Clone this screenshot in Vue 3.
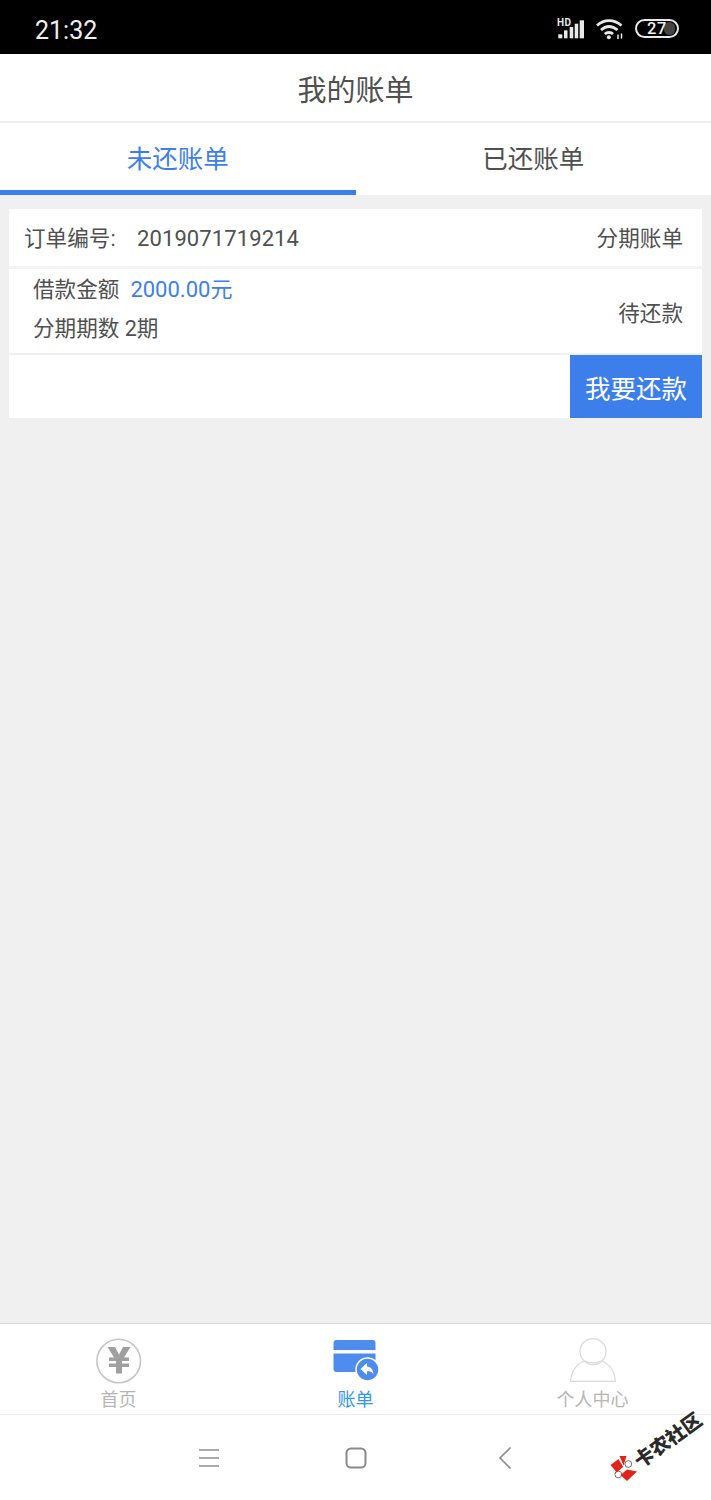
<script setup>
const tabs = [
  { label: '未还账单', active: true },
  { label: '已还账单', active: false },
]
</script>

<template>
  <div class="page">
    <div class="status">
      <span class="time">21:32</span>
      <div class="status-icons">
        <svg width="28" height="24" viewBox="0 0 28 24">
          <text x="0" y="9" class="hd">HD</text>
          <rect x="1.300" y="17.300" width="4" height="4" fill="#e8e8e8" />
          <rect x="7" y="13.300" width="3.500" height="8" fill="#e8e8e8" />
          <rect x="12.700" y="10" width="3.500" height="11.300" fill="#e8e8e8" />
          <rect x="17.700" y="6.700" width="3.500" height="14.600" fill="#e8e8e8" />
          <rect x="22.700" y="3.300" width="4.300" height="18" fill="#e8e8e8" />
        </svg>
        <svg width="28" height="22" viewBox="0 0 28 22" fill="none" stroke="#e8e8e8" stroke-width="2.800">
          <path d="M1 7.500C8 1 18 1 25.500 7.500" />
          <path d="M5 12C10 7.500 16 7.500 21.500 12" />
          <path d="M8.800 16C11 14 15 14 17 16" />
          <circle cx="12.900" cy="19.300" r="2" fill="#e8e8e8" stroke="none" />
          <path d="M22 16.500v4.500M25.500 15.500v5" stroke-width="1.500" />
        </svg>
        <div class="battery">
          <span class="battery-fill"></span>
          <span class="battery-num">27</span>
        </div>
      </div>
    </div>

    <header class="title">我的账单</header>

    <nav class="tabs">
      <div v-for="t in tabs" :key="t.label" class="tab" :class="{ active: t.active }">{{ t.label }}</div>
    </nav>

    <main class="content">
      <section class="card">
        <div class="row-order">
          <span class="order-label">订单编号:</span>
          <span class="order-no">2019071719214</span>
          <span class="spacer"></span>
          <span>分期账单</span>
        </div>
        <div class="row-info">
          <div class="info-left">
            <div class="line">借款金额<span class="amount">2000.00元</span></div>
            <div class="line">分期期数 2期</div>
          </div>
          <span>待还款</span>
        </div>
        <div class="row-action">
          <button class="repay">我要还款</button>
        </div>
      </section>
    </main>

    <footer class="tabbar">
      <div class="bar-item">
        <svg class="bar-icon" width="46" height="46" viewBox="0 0 46 46">
          <circle cx="22.700" cy="23" r="21.800" fill="none" stroke="#c6c6c6" stroke-width="1.600" />
          <path d="M11.500 9h7.500l4 7.500 4-7.500h7.500l-6.500 10.500h5v3.500h-7v2.500h7v3.500h-7v6.500h-6v-6.500h-7v-3.500h7V23h-7v-3.500h5z" fill="#a0a0a0" />
        </svg>
        <span>首页</span>
      </div>
      <div class="bar-item on">
        <svg class="bar-icon" width="46" height="46" viewBox="0 0 46 46">
          <path d="M.5 5a3 3 0 0 1 3-3h36a3 3 0 0 1 3 3v7H.5z" fill="#4e8cee" />
          <path d="M.5 15.500h42V31a3 3 0 0 1-3 3h-36a3 3 0 0 1-3-3z" fill="#4e8cee" />
          <circle cx="34.500" cy="31.500" r="11.500" fill="#4e8cee" stroke="#fff" stroke-width="1.500" />
          <path d="M27.500 31l6.500-6v3.500c4 .2 6 3 6.500 8-1.500-2.800-3.500-3.300-6.500-3.300V37z" fill="#fff" />
        </svg>
        <span>账单</span>
      </div>
      <div class="bar-item">
        <svg class="bar-icon" width="46" height="46" viewBox="0 0 46 46" fill="none" stroke="#dcdcdc" stroke-width="1.300">
          <circle cx="23" cy="13.500" r="13" />
          <path d="M.7 43.300C1 32 8 25 15 23c4 2.500 12 2.500 16 0c7 2 14 9 14.300 20.300z" />
        </svg>
        <span>个人中心</span>
      </div>
    </footer>

    <div class="sysnav">
      <svg class="nav-menu" width="22" height="20" viewBox="0 0 22 20" stroke="#8e8e8e" stroke-width="1.700">
        <path d="M1 2h20M1 10h20M1 18h20" />
      </svg>
      <svg class="nav-home" width="22" height="22" viewBox="0 0 22 22" fill="none" stroke="#8a8a8a" stroke-width="2">
        <rect x="1.500" y="1.500" width="19" height="19" rx="4.500" />
      </svg>
      <svg width="14" height="24" viewBox="0 0 14 24" fill="none" stroke="#8e8e8e" stroke-width="1.700">
        <path d="M12.500 1.500L2 12l10.500 10.500" />
      </svg>
    </div>

    <svg class="wm-logo" width="28" height="28" viewBox="0 0 28 28">
      <circle cx="18.300" cy="9" r="3.400" fill="#fff" stroke="#333" stroke-width="0.700" />
      <circle cx="8.300" cy="19.500" r="3.400" fill="#fff" stroke="#333" stroke-width="0.700" />
      <path d="M.5 10l8-6 4.700 8-6.500 5.500z" fill="#e2231a" />
      <path d="M9.500 1h7l-3 9.500z" fill="#e2231a" />
      <path d="M10.500 20l6.500-5.500 10 2-10 9.500z" fill="#e2231a" />
    </svg>
    <span class="wm-text">卡农社区</span>
  </div>
</template>

<style>
body {
  margin: 0;
}
</style>

<style scoped>
.page {
  position: relative;
  width: 711px;
  height: 1500px;
  display: flex;
  flex-direction: column;
  overflow: hidden;
  background: #f0f0f0;
  color: #505050;
  font-family: Roboto, "Noto Sans CJK SC", sans-serif;
}

.status {
  height: 54px;
  flex: none;
  background: #000;
  display: flex;
  align-items: center;
  justify-content: space-between;
  padding: 6px 32px 0 35px;
  box-sizing: border-box;
}
.time {
  color: #f0f0f0;
  font-size: 25px;
}
.status-icons {
  display: flex;
  align-items: center;
  gap: 11px;
  margin-top: -3px;
}
.status-icons svg {
  display: block;
}
.hd {
  font: bold 10px Roboto, sans-serif;
  letter-spacing: 0.5px;
  fill: #e8e8e8;
}
.battery {
  position: relative;
  width: 44px;
  height: 19px;
  box-sizing: border-box;
  border: 2px solid #e8e8e8;
  border-radius: 10px;
  text-align: center;
}
.battery-fill {
  position: absolute;
  right: 2px;
  top: 1px;
  bottom: 1px;
  width: 11px;
  background: #444;
  border-radius: 7px;
}
.battery-num {
  position: relative;
  display: block;
  color: #eee;
  font-size: 16.500px;
  font-weight: 500;
  line-height: 15px;
  letter-spacing: 0.5px;
}

.title {
  height: 69px;
  flex: none;
  box-sizing: border-box;
  background: #fff;
  border-bottom: 2px solid #f0f0f0;
  display: flex;
  align-items: center;
  justify-content: center;
  font-size: 29px;
}

.tabs {
  flex: none;
  display: flex;
  height: 72px;
  background: #fff;
}
.tab {
  flex: 1;
  display: flex;
  align-items: center;
  justify-content: center;
  box-sizing: border-box;
  font-size: 25.500px;
  padding-bottom: 1px;
  border-bottom: 5px solid transparent;
}
.tab.active {
  color: #3d7fea;
  border-bottom-color: #3d7fea;
}

.content {
  flex: 1;
  padding: 14px 9px 0;
}
.card {
  background: #fff;
  font-size: 21.600px;
}
.row-order {
  display: flex;
  align-items: baseline;
  padding: 15px 19px 0 15px;
  height: 42px;
  line-height: 30px;
  border-bottom: 3px solid #f3f3f3;
}
.order-label {
  width: 113px;
}
.order-no {
  font-size: 22px;
  letter-spacing: 0.100px;
}
.spacer {
  flex: 1;
}
.row-info {
  height: 84px;
  display: flex;
  align-items: center;
  justify-content: space-between;
  padding: 0 19px 0 24px;
  border-bottom: 2px solid #f0f0f0;
}
.info-left {
  display: flex;
  flex-direction: column;
  gap: 8px;
  margin-top: -4px;
}
.line {
  line-height: 31px;
}
.amount {
  color: #3d7fea;
  font-size: 22px;
  margin-left: 11px;
}
.row-action {
  height: 63px;
  display: flex;
  justify-content: flex-end;
}
.repay {
  width: 132px;
  border: none;
  padding: 0;
  background: #3d7fea;
  color: #fff;
  font: inherit;
  font-size: 25.500px;
}

.tabbar {
  flex: none;
  height: 92px;
  box-sizing: border-box;
  background: #fff;
  border-top: 1px solid #d6d6d6;
  border-bottom: 1px solid #efefef;
  display: grid;
  grid-template-columns: repeat(3, 1fr);
}
.bar-item {
  display: flex;
  flex-direction: column;
  align-items: center;
  padding-top: 14px;
  font-size: 18px;
  color: #b5b5b5;
  line-height: 24px;
}
.bar-item.on {
  color: #2f98ee;
}
.bar-icon {
  display: block;
  margin-bottom: 4px;
}

.sysnav {
  flex: none;
  height: 85px;
  background: #fff;
  display: flex;
  align-items: center;
  padding-left: 198px;
}
.sysnav svg {
  display: block;
}
.nav-menu {
  margin-right: 125px;
}
.nav-home {
  margin-right: 131px;
}

.wm-logo {
  position: absolute;
  left: 610px;
  top: 1455px;
}
.wm-text {
  position: absolute;
  left: 667px;
  top: 1439px;
  transform: translate(-50%, -50%) rotate(-36deg);
  font-size: 19.500px;
  font-weight: 900;
  color: #2a2a2a;
  white-space: nowrap;
}
</style>
